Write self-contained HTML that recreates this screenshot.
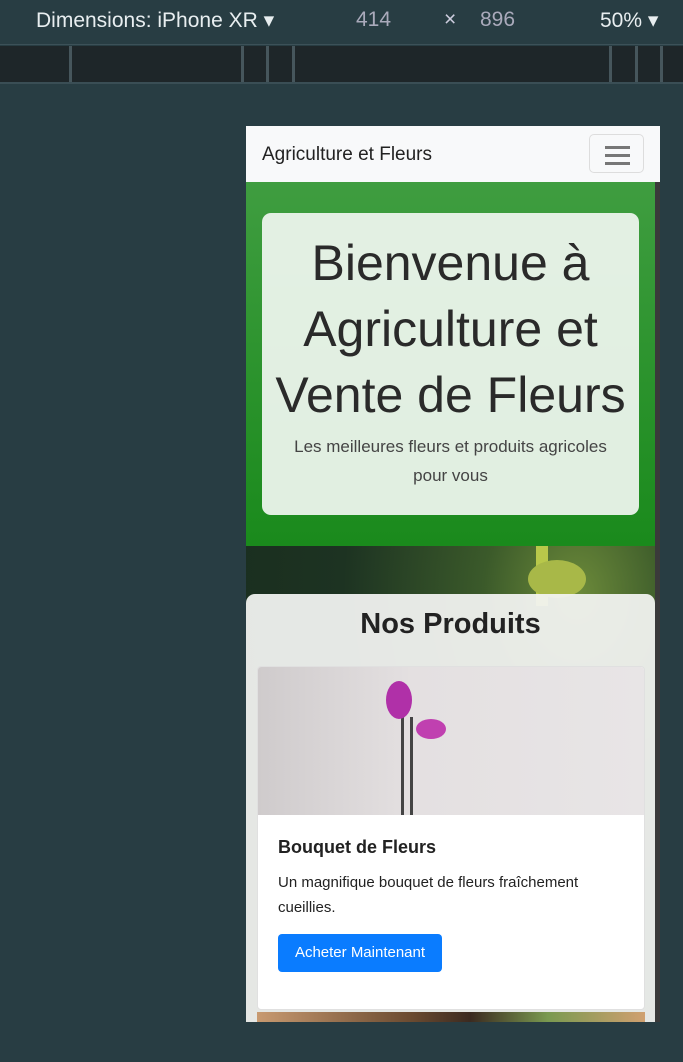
<!DOCTYPE html>
<html><head><meta charset="utf-8"><style>
*{box-sizing:border-box;margin:0;padding:0}
body{width:683px;height:1062px;background:#283d43;font-family:"Liberation Sans",sans-serif;position:relative;overflow:hidden}
.top{position:absolute;left:0;top:0;width:683px;height:45px;background:#283d43;border-bottom:1px solid #3c5158;color:#e8eef0;font-size:21px}
.top span{position:absolute;top:8px}
.bar{position:absolute;left:0;top:46px;width:683px;height:38px;background:#1e2629;border-bottom:2px solid #3a4e55}
.bar i{position:absolute;top:0;width:3px;height:36px;background:#46565c}
.vp{position:absolute;left:246px;top:126px;width:414px;height:896px;overflow:hidden;background:#1d3a22}
.nav{position:absolute;left:0;top:0;width:414px;height:56px;background:#f8f9fa}
.brand{position:absolute;left:16px;top:18px;font-size:19px;color:#222}
.tog{position:absolute;left:343px;top:8px;width:55px;height:39px;border:1px solid #ddd;border-radius:5px}
.tog i{position:absolute;left:15px;width:25px;height:2px;background:#777}
.bgimg{position:absolute;left:0;top:420px;width:414px;height:476px;background:radial-gradient(ellipse at 80% 10%,#6c8a3a 0,#3b5a2a 20%,#1d3322 50%,#172a1c 100%)}
.hero{position:absolute;left:0;top:56px;width:409px;height:364px;background:linear-gradient(#3f9d40,#1a8a1c)}
.hcard{position:absolute;left:16px;top:31px;width:377px;height:302px;background:rgba(240,246,240,.93);border-radius:9px;text-align:center;color:#2a2a2a}
.hcard h1{font-weight:normal;font-size:50px;line-height:66px;margin-top:17px;color:#2a2a2a}
.hcard p{font-size:17px;line-height:29px;color:#444;margin:4px 18px 0}
.prod{position:absolute;left:0;top:468px;width:409px;height:440px;background:rgba(242,243,241,.94);border-radius:9px}
.prod h2{text-align:center;font-size:29px;font-weight:bold;color:#222;margin-top:14px}
.card{position:absolute;left:11px;top:72px;width:388px;height:344px;background:#fff;border:1px solid #e0e0e0;border-radius:4px;overflow:hidden}
.img{height:148px;background:linear-gradient(90deg,#cfcbcc,#e4e0e1 40%,#e8e5e6)}
.card h5{font-size:18px;font-weight:bold;color:#222;margin:22px 0 0 20px}
.card p{font-size:15px;line-height:25px;color:#222;margin:12px 20px 0 20px}
.btn{position:absolute;left:20px;top:267px;width:164px;height:38px;background:#0a7cff;border-radius:4px;color:#fff;font-size:15px;line-height:38px;text-align:center}
.img2{position:absolute;left:11px;top:418px;width:388px;height:20px;background:linear-gradient(90deg,#c89a70,#6a4a30 40%,#3b2a20 55%,#7a9a50 75%,#d0a070)}
</style></head><body>
<div class="top"><span style="left:36px">Dimensions: iPhone XR ▾</span><span style="left:356px;color:#aab">414</span><span style="left:444px;color:#ccd">×</span><span style="left:480px;color:#aab">896</span><span style="left:600px">50% ▾</span></div>
<div class="bar"><i style="left:69px"></i><i style="left:241px"></i><i style="left:266px"></i><i style="left:292px"></i><i style="left:609px"></i><i style="left:635px"></i><i style="left:660px"></i></div>
<div class="vp">
<div class="bgimg"></div>
<div style="position:absolute;left:290px;top:420px;width:12px;height:60px;background:#b8c84a"></div>
<div style="position:absolute;left:282px;top:434px;width:58px;height:38px;border-radius:50%;background:#a8b848"></div>
<div class="nav"><div class="brand">Agriculture et Fleurs</div><div class="tog"><i style="top:11px;height:3px"></i><i style="top:19px;height:3px"></i><i style="top:27px;height:3px"></i></div></div>
<div class="hero"><div class="hcard"><h1>Bienvenue à Agriculture et Vente de Fleurs</h1><p>Les meilleures fleurs et produits agricoles pour vous</p></div></div>
<div class="prod"><h2>Nos Produits</h2>
<div class="card"><div class="img" style="position:relative">
<div style="position:absolute;left:143px;top:30px;width:3px;height:118px;background:#444"></div>
<div style="position:absolute;left:152px;top:50px;width:3px;height:98px;background:#444"></div>
<div style="position:absolute;left:128px;top:14px;width:26px;height:38px;border-radius:50%;background:#b030a8"></div>
<div style="position:absolute;left:158px;top:52px;width:30px;height:20px;border-radius:50%;background:#c040b0"></div>
</div>
<h5>Bouquet de Fleurs</h5><p>Un magnifique bouquet de fleurs fraîchement cueillies.</p><div class="btn">Acheter Maintenant</div></div>
<div class="img2"></div>
</div>
<div style="position:absolute;left:409px;top:56px;width:5px;height:840px;background:#3a3a3a"></div>
</div>
</body></html>
